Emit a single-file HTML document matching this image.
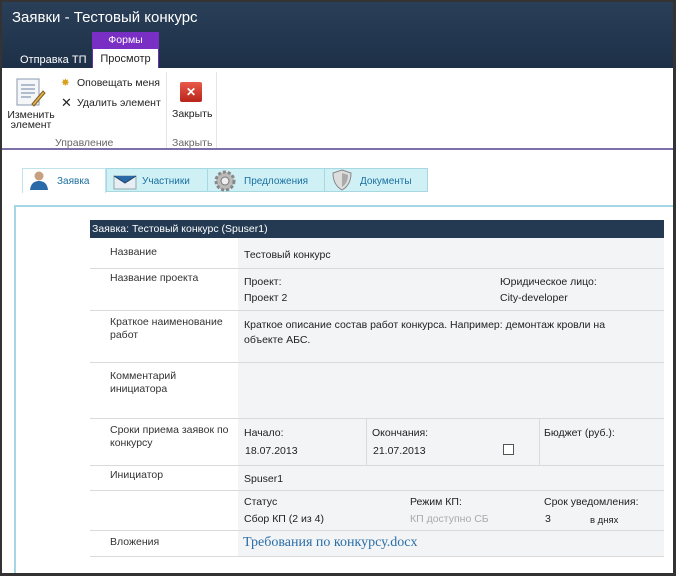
<!DOCTYPE html>
<html><head><meta charset="utf-8"><style>
*{box-sizing:border-box;margin:0;padding:0}
body{width:676px;height:576px;overflow:hidden;background:#fff;font-family:"Liberation Sans",sans-serif;font-size:11px;color:#222;position:relative}
.frame{position:absolute;left:0;top:0;width:676px;height:576px;border:2px solid #333;border-right-width:3px;border-bottom-width:3px;pointer-events:none;z-index:10}
.top{position:absolute;left:0;top:0;width:676px;height:68px;background:linear-gradient(#2a3f58,#1d3048)}
.title{position:absolute;left:12px;top:9px;color:#fff;font-size:15px}
.tab{position:absolute;color:#fff;font-size:11px}
.a{position:absolute}
.lbl{position:absolute;left:110px;color:#333;font-size:10.5px;line-height:13px}
.v{position:absolute;font-size:10.5px;color:#222}
.hl{position:absolute;left:90px;width:574px;height:1px;background:#dadada}
.tt{position:absolute;top:176px;font-size:10px;color:#1b6fa0}
</style></head><body>
<div class="top"></div>
<div class="title">Заявки - Тестовый конкурс</div>
<div class="a" style="left:92px;top:32px;width:67px;height:17px;background:#7a2fc4;color:#fff;text-align:center;font-size:10.5px;line-height:17px">Формы</div>
<div class="tab" style="left:20px;top:54px">Отправка ТП</div>
<div class="a" style="left:92px;top:49px;width:67px;height:20px;background:#fff;text-align:center;line-height:20px;font-size:11px;border-left:1px solid #6a2fb0;border-right:1px solid #6a2fb0">Просмотр</div>
<div class="a" style="left:0;top:68px;width:676px;height:82px;background:#fff;border-bottom:2px solid #7d6fa8"></div>
<svg class="a" style="left:16px;top:78px" width="30" height="30"><rect x="1" y="1" width="22" height="26" fill="#f4f6f8" stroke="#8a9ab0"/><g stroke="#6b82a3"><line x1="5" y1="7" x2="19" y2="7"/><line x1="5" y1="11" x2="19" y2="11"/><line x1="5" y1="15" x2="19" y2="15"/><line x1="5" y1="19" x2="15" y2="19"/></g><path d="M16 26 L27 13 L29 15 L18 28 Z" fill="#e0b050" stroke="#806020"/></svg>
<div class="a" style="left:6px;top:110px;font-size:10.5px;line-height:10px;text-align:center;width:50px">Изменить элемент</div>
<div class="a" style="left:61px;top:77px;font-size:10.5px;color:#d8a020">✸</div>
<div class="a" style="left:77px;top:77px;font-size:10.5px">Оповещать меня</div>
<div class="a" style="left:61px;top:95px;font-size:13px">✕</div>
<div class="a" style="left:77px;top:97px;font-size:10.5px">Удалить элемент</div>
<div class="a" style="left:55px;top:137px;font-size:10.5px;color:#666">Управление</div>
<div class="a" style="left:166px;top:72px;width:1px;height:76px;background:#e4e4e4"></div>
<div class="a" style="left:216px;top:72px;width:1px;height:76px;background:#e4e4e4"></div>
<div class="a" style="left:180px;top:82px;width:22px;height:20px;background:linear-gradient(#e85a4a,#b8241a);border-radius:2px;color:#fff;text-align:center;font-size:12px;line-height:20px;font-weight:bold">✕</div>
<div class="a" style="left:172px;top:108px;font-size:10.5px">Закрыть</div>
<div class="a" style="left:172px;top:137px;font-size:10.5px;color:#666">Закрыть</div>
<div class="a" style="left:22px;top:168px;width:84px;height:25px;background:#fff;border:1px solid #bfe3ea;border-bottom:none"></div>
<div class="a" style="left:106px;top:168px;width:322px;height:24px;background:#cff1f6;border:1px solid #a8d8e2"></div>
<div class="a" style="left:207px;top:168px;width:1px;height:24px;background:#a8d8e2"></div>
<div class="a" style="left:324px;top:168px;width:1px;height:24px;background:#a8d8e2"></div>
<svg class="a" style="left:29px;top:170px" width="20" height="20"><circle cx="10" cy="6" r="4.5" fill="#c8a080"/><path d="M1 20 Q2 11 10 11 Q18 11 19 20Z" fill="#2a6aa8"/></svg>
<div class="tt" style="left:57px">Заявка</div>
<svg class="a" style="left:113px;top:172px" width="24" height="18"><rect x="1" y="4" width="22" height="13" fill="#e8eef4" stroke="#8aa"/><path d="M1 4 L12 11 L23 4" fill="#2a6aa8" stroke="#246"/></svg>
<div class="tt" style="left:142px">Участники</div>
<svg class="a" style="left:214px;top:170px" width="22" height="22"><circle cx="11" cy="11" r="9" fill="#bbb" stroke="#888" stroke-dasharray="3 2" stroke-width="3"/><circle cx="11" cy="11" r="4" fill="#eee" stroke="#777"/></svg>
<div class="tt" style="left:244px">Предложения</div>
<svg class="a" style="left:331px;top:169px" width="22" height="22"><path d="M11 1 L20 4 Q20 16 11 21 Q2 16 2 4Z" fill="#ddd" stroke="#888"/><path d="M11 4 L17 6 Q17 14 11 18Z" fill="#aaa"/></svg>
<div class="tt" style="left:360px">Документы</div>
<div class="a" style="left:14px;top:205px;width:660px;height:2px;background:#a6d6e6"></div>
<div class="a" style="left:14px;top:205px;width:2px;height:371px;background:#a6d6e6"></div>
<div class="a" style="left:238px;top:238px;width:426px;height:318px;background:#f3f4f5"></div>
<div class="a" style="left:90px;top:220px;width:574px;height:18px;background:#233a52;color:#fff;font-size:10.5px;line-height:18px;padding-left:2px">Заявка: Тестовый конкурс (Spuser1)</div>
<div class="hl" style="top:268px"></div><div class="hl" style="top:310px"></div><div class="hl" style="top:362px"></div><div class="hl" style="top:418px"></div><div class="hl" style="top:465px"></div><div class="hl" style="top:490px"></div><div class="hl" style="top:530px"></div><div class="hl" style="top:556px"></div>
<div class="a" style="left:366px;top:418px;width:1px;height:47px;background:#dadada"></div>
<div class="a" style="left:539px;top:418px;width:1px;height:47px;background:#dadada"></div>
<div class="lbl" style="top:246px">Название</div>
<div class="lbl" style="top:272px">Название проекта</div>
<div class="lbl" style="top:316px">Краткое наименование<br>работ</div>
<div class="lbl" style="top:370px">Комментарий<br>инициатора</div>
<div class="lbl" style="top:424px">Сроки приема заявок по<br>конкурсу</div>
<div class="lbl" style="top:469px">Инициатор</div>
<div class="lbl" style="top:536px">Вложения</div>
<div class="v" style="left:244px;top:249px">Тестовый конкурс</div>
<div class="v" style="left:244px;top:276px">Проект:</div>
<div class="v" style="left:244px;top:292px">Проект 2</div>
<div class="v" style="left:500px;top:276px">Юридическое лицо:</div>
<div class="v" style="left:500px;top:292px">City-developer</div>
<div class="v" style="left:244px;top:318px;line-height:15px;width:395px">Краткое описание состав работ конкурса. Например: демонтаж кровли на объекте АБС.</div>
<div class="v" style="left:244px;top:427px">Начало:</div>
<div class="v" style="left:245px;top:445px">18.07.2013</div>
<div class="v" style="left:372px;top:427px">Окончания:</div>
<div class="v" style="left:373px;top:445px">21.07.2013</div>
<div class="a" style="left:503px;top:444px;width:11px;height:11px;border:1px solid #555;background:#fff"></div>
<div class="v" style="left:544px;top:427px">Бюджет (руб.):</div>
<div class="v" style="left:244px;top:473px">Spuser1</div>
<div class="v" style="left:244px;top:496px">Статус</div>
<div class="v" style="left:244px;top:513px">Сбор КП (2 из 4)</div>
<div class="v" style="left:410px;top:496px">Режим КП:</div>
<div class="v" style="left:410px;top:513px;color:#aaa">КП доступно СБ</div>
<div class="v" style="left:544px;top:496px">Срок уведомления:</div>
<div class="v" style="left:545px;top:513px">3</div>
<div class="v" style="left:590px;top:515px;font-size:9.5px">в днях</div>
<div class="v" style="left:243px;top:535px;font-family:'Liberation Serif',serif;font-size:14px;color:#2a6ea8">Требования по конкурсу.docx</div>
<div class="frame"></div>
</body></html>
